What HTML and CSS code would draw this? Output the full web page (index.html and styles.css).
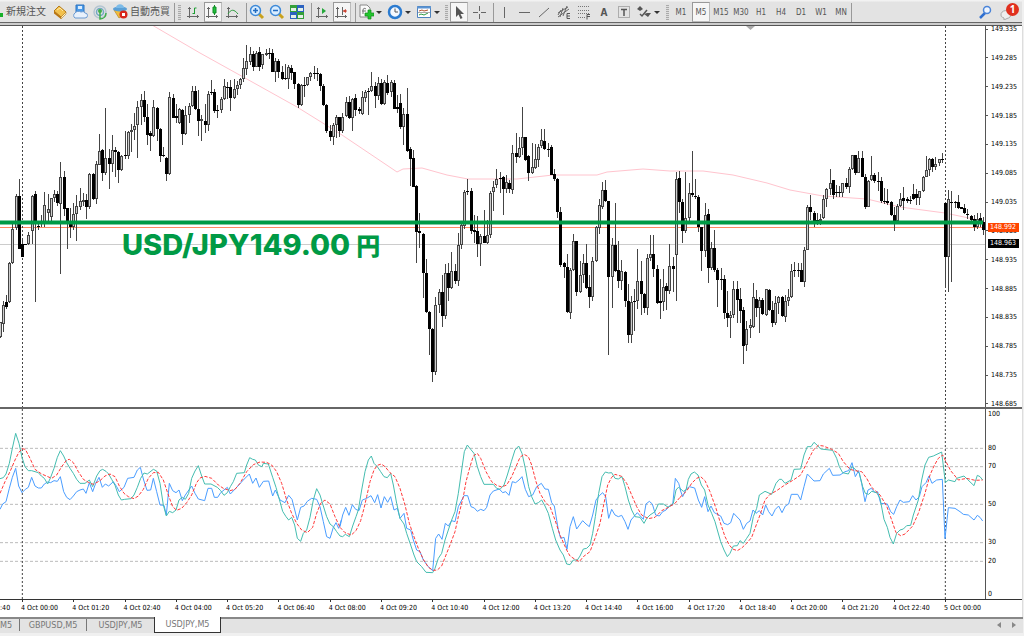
FILE: index.html
```html
<!DOCTYPE html>
<html lang="ja">
<head>
<meta charset="utf-8">
<title>USDJPY,M5</title>
<link rel="stylesheet" href="styles.css">
</head>
<body>
<header class="toolbar">
  <button class="tool new-order"><svg class="plus-edge" viewBox="0 0 4 16"><path d="M0 10h3v4H0z" fill="#17b02a"/></svg>新規注文</button>
  <button class="tool" aria-label="Market"><svg viewBox="0 0 16 16"><path d="M2 7 7 2l7 6-5 5z" fill="#f2c14e" stroke="#b57a17"/><path d="m2 7 7 6v2L2 9.500z" fill="#b8730f"/><path d="m9 13 5-5v2l-5 5z" fill="#fff3c8" stroke="#b57a17" stroke-width=".6"/><path d="m5 6 3-2 3 3" fill="none" stroke="#ffe9a3"/></svg></button>
  <button class="tool" aria-label="Cloud"><svg viewBox="0 0 16 16"><path d="M4 1h8v8H4z" fill="#4d9be8" stroke="#2b73c0"/><path d="M6 2h4v3H6z" fill="#d8ecff"/><path d="M3 14a3 3 0 0 1 0-5 4 3 0 0 1 6-1 3 3 0 0 1 4 1 2.500 2.500 0 0 1 0 5z" fill="#e8f1fc" stroke="#6c9bd2"/></svg></button>
  <button class="tool" aria-label="Signals"><svg viewBox="0 0 16 16" fill="none"><circle cx="8" cy="8" r="6" stroke="#b4c5d1" stroke-width="1.500"/><circle cx="8" cy="8" r="3.500" stroke="#75a8c4" stroke-width="1.500"/><path d="M8 7v8c4 0 6-3 6-6" stroke="#3fae4b" stroke-width="1.500"/><circle cx="8" cy="7" r="2" fill="#3fae4b"/></svg></button>
  <button class="tool auto-trade"><svg viewBox="0 0 16 16"><path d="m2 7 5 8 7-5-2-5z" fill="#f0bd3d" stroke="#bd851c" stroke-width=".7"/><ellipse cx="8" cy="6" rx="7" ry="2.500" fill="#5a9fd6"/><path d="M4 5c0-5 8-5 8 0z" fill="#7cbbe8"/><circle cx="11.500" cy="11.500" r="4" fill="#d8261c"/><path d="M10 10h3v3h-3z" fill="#fff"/></svg>自動売買</button>
  <span class="sep"></span><span class="grip"></span>
  <button class="tool" aria-label="Bars"><svg viewBox="0 0 16 16" fill="none" stroke="#666"><path d="M4.500 3v11M2 12.500h12M3 4.500h3M12.500 11v3"/><path d="M9.500 10V4h2M7.500 9.500h2" stroke="#1d9e33"/></svg></button>
  <button class="tool on" aria-label="Candles"><svg viewBox="0 0 16 16" fill="none" stroke="#666"><path d="M3.500 3v11M1 12.500h12M2 4.500h3M11.500 11v3"/><path d="M9.500 1v10" stroke="#118c25"/><path d="M8 3h3v6H8z" fill="#20c03d" stroke="#118c25"/></svg></button>
  <button class="tool" aria-label="Line"><svg viewBox="0 0 16 16" fill="none" stroke="#666"><path d="M3.500 3v11M1 12.500h12M2 4.500h3M11.500 11v3"/><path d="M3 10c3-5 6-5 10 0" stroke="#2a9b3b"/></svg></button>
  <span class="sep"></span>
  <button class="tool" aria-label="Zoom in"><svg viewBox="0 0 16 16"><path d="m10 10 4 4" stroke="#c9a11c" stroke-width="3"/><circle cx="6.500" cy="6.500" r="5" fill="#d9edff" stroke="#3f8ad8" stroke-width="1.500"/><path d="M4 6.500h5M6.500 4v5" stroke="#226bc0" stroke-width="1.500"/></svg></button>
  <button class="tool" aria-label="Zoom out"><svg viewBox="0 0 16 16"><path d="m10 10 4 4" stroke="#c9a11c" stroke-width="3"/><circle cx="6.500" cy="6.500" r="5" fill="#d9edff" stroke="#3f8ad8" stroke-width="1.500"/><path d="M4 6.500h5" stroke="#226bc0" stroke-width="1.500"/></svg></button>
  <button class="tool" aria-label="Tile"><svg viewBox="0 0 16 16"><path d="M1 1h7v7H1zM8 8h7v7H8z" fill="#34a03a"/><path d="M8 1h7v7H8zM1 8h7v7H1z" fill="#2c62c0"/><path d="M2 4h5v3H2zM9 4h5v3H9zM2 11h5v3H2zM9 11h5v3H9z" fill="#e4f0e8"/></svg></button>
  <span class="sep wide"></span>
  <button class="tool" aria-label="Auto scroll"><svg viewBox="0 0 16 16" fill="none" stroke="#666"><path d="M4.500 3v11M2 12.500h12M3 4.500h3M12.500 11v3"/><path d="M8 4v6l4-3z" fill="#25a83b" stroke="none"/></svg></button>
  <button class="tool on" aria-label="Chart shift"><svg viewBox="0 0 16 16" fill="none" stroke="#666"><path d="M3.500 3v11M1 12.500h12M2 4.500h3M11.500 11v3M8.500 3v8"/><path d="M13 7H9" stroke="#c43"/><path d="M12 5v4L9 7z" fill="#c43" stroke="none"/></svg></button>
  <span class="sep"></span>
  <button class="tool drop" aria-label="Indicators"><svg viewBox="0 0 16 16"><path d="M2 1h7l3 3v9H2z" fill="#fafafa" stroke="#888"/><path d="M5 10V6c0-2 2-2 3-1M4 7h4" fill="none" stroke="#777"/><path d="M7 9h3V6h3v3h3v3h-3v3h-3v-3H7z" fill="#22c52d" stroke="#118a1b" stroke-width=".7"/></svg></button>
  <button class="tool drop" aria-label="Periods"><svg viewBox="0 0 16 16"><circle cx="8" cy="8" r="6" fill="#f4f9ff" stroke="#2b7bd0" stroke-width="2.500"/><path d="M8 4.500V8h3" fill="none" stroke="#555"/></svg></button>
  <button class="tool drop" aria-label="Templates"><svg viewBox="0 0 16 16" fill="none"><path d="M1.500 2.500h13v11h-13z" fill="#fff" stroke="#4f83bd"/><path d="M1 3.500h14" stroke="#5b93d3" stroke-width="2"/><path d="m3 7 3-1 2 1 4-1" stroke="#b5522d"/><path d="m3 11 2-1 3 1 4-2" stroke="#2f9a43"/><path d="M2 8.500h12" stroke="#aaa"/></svg></button>
  <span class="grip lined"></span>
  <button class="tool on" aria-label="Cursor"><svg viewBox="0 0 16 16"><path d="M5 2v11l2.500-2.500L9.500 15l2-1-2-4H13z" fill="#555"/></svg></button>
  <button class="tool" aria-label="Crosshair"><svg viewBox="0 0 16 16" stroke="#666"><path d="M2 8.500h5M10 8.500h5M8.500 2v5M8.500 10v5"/></svg></button>
  <span class="sep wide"></span>
  <button class="tool" aria-label="Vertical line"><svg viewBox="0 0 16 16" stroke="#666"><path d="M8.500 3v11"/></svg></button>
  <button class="tool" aria-label="Horizontal line"><svg viewBox="0 0 16 16" stroke="#666"><path d="M3 8.500h11"/></svg></button>
  <button class="tool" aria-label="Trend line"><svg viewBox="0 0 16 16" stroke="#666"><path d="M3 13 13 4"/></svg></button>
  <button class="tool" aria-label="Channel"><svg viewBox="0 0 16 16" fill="none" stroke="#666"><path d="m2 9 10-6M2 13 13 5M4 13l3-9M7 12l4-10M2 11l3-5"/><path d="M14 9.500h-3v5h3M11 12h3" stroke="#555"/></svg></button>
  <button class="tool" aria-label="Fibonacci"><svg viewBox="0 0 16 16" fill="none" stroke="#777"><path d="M2 2.500h12M2 6.500h12M2 9.500h12M2 13.500h7" stroke-dasharray="1 1"/><path d="M14 10.500h-3v5M11 12.500h3" stroke="#555"/></svg></button>
  <button class="tool letter">A</button>
  <button class="tool" aria-label="Text label"><svg viewBox="0 0 16 16" fill="none" stroke="#777"><path d="M2.500 2.500h11v11h-11z" stroke-dasharray="1 1"/><path d="M5 5.500h6M8 5v7" stroke="#555" stroke-width="1.500"/></svg></button>
  <button class="tool drop" aria-label="Arrows"><svg viewBox="0 0 16 16"><path d="m4 2 3 3-3 2-3-2zM11 9h4l-3 4-4-3z" fill="#555"/><path d="m4 10 2 2 5-6" fill="none" stroke="#555" stroke-width="1.500"/></svg></button>
  <span class="grip lined far"></span>
  <button class="tool period">M1</button><button class="tool period on">M5</button><button class="tool period">M15</button><button class="tool period">M30</button><button class="tool period">H1</button><button class="tool period">H4</button><button class="tool period">D1</button><button class="tool period">W1</button><button class="tool period">MN</button>
  <span class="sep end"></span>
  <button class="tool search" aria-label="Search"><svg viewBox="0 0 16 16"><path d="m7 9-5 5" stroke="#2f6fd0" stroke-width="2.500"/><circle cx="9" cy="6" r="3.500" fill="#eef5ff" stroke="#4a84d8" stroke-width="1.500"/></svg></button>
  <button class="tool alerts" aria-label="Messages"><svg viewBox="0 0 16 16"><path d="M1 11a5 4 0 1 1 6 3.500L4 16v-2c-2-1-3-1-3-3z" fill="#eee" stroke="#aaa"/></svg><span class="badge">1</span></button>
</header>
<main class="chart">
  <section class="price">
    <svg class="plot" id="price" viewBox="0 26 985 381" preserveAspectRatio="none">
      <path d="M0 244.500H985" stroke="#ccc"/>
      <path d="M0 227.500H985" stroke="#ff8a60"/>
      <path d="M746 26h9l-4.500 4z" fill="#aaa"/>
      <path class="day" d="M22.500 26V407M945.500 26V407"/>
      <polyline class="average" points="152,25 200,53 245,78 297,107 342,135 397,172 403,169 422,168 447,175 468,179 517,179 553,175 597,175 607,172 643,169 670,171 703,171 733,175 767,183 790,190 823,196 867,199 900,207 945,213 983,221"/>
      <g id="candles"></g>
      <path d="M0 222.500H983" stroke="#009a45" stroke-width="4"/>
    </svg>
    <p class="caption">USD/JPY149.00<span>円</span></p>
    <ol class="scale">
      <li>149.335</li><li>149.285</li><li>149.235</li><li>149.185</li><li>149.135</li><li>149.085</li><li>149.035</li><li>148.985</li><li>148.935</li><li>148.885</li><li>148.835</li><li>148.785</li><li>148.735</li><li>148.685</li>
    </ol>
    <span class="quote ask">148.992</span>
    <span class="quote bid">148.963</span>
  </section>
  <section class="oscillator">
    <svg class="plot" viewBox="0 27 2955 570" preserveAspectRatio="none">
      <path class="levels" d="M0 145H2955M0 200H2955M0 313H2955M0 428H2955M0 484H2955"/>
      <path class="day wide" d="M67 27V597M2836 27V597"/>
      <g class="blue">
        <polyline points="0,328 8,312 18,305 28,265 37,232 47,205 56,258 66,278 76,268 85,262 95,232 105,258 115,264 124,264 133,252 143,246 152,248 162,242 172,244 181,230 191,275 200,292 210,299 220,288 230,275 240,270 250,267 258,280 268,248 278,275 287,250 297,232 307,262 316,252 326,258 340,245 350,260 358,275 372,262 383,235 402,232 412,210 421,202 431,240 441,271 452,270 460,235 470,275 480,315 492,316 499,345 508,250 518,272 528,278 537,270 547,302 556,285 575,258 585,280 595,297 614,302 624,265 635,265 643,292 653,292 662,278 682,262 691,282 710,262 730,240 748,222 758,250 768,234 778,262 790,244 806,243 818,288 826,270 840,300 855,308 866,286 876,298 892,360 902,322 912,318 922,304 935,295 950,298 960,320 970,365 980,410 990,415 1000,382 1008,368 1016,385 1024,360"/>
        <polyline transform="translate(1020)" points="0,380 8,345 17,322 27,346 37,314 47,328 57,332 67,300 80,295 93,287 104,308 113,284 123,324 133,290 143,307 152,290 162,330 172,325 180,355 192,340 200,385 212,390 220,420 230,450 240,455 250,480 265,500 278,512 287,415 296,402 306,418 316,370 325,378 335,362 345,365 355,320 372,287 383,287 393,320 403,324 412,334 422,328 432,332 440,322 450,285 460,273 478,267 488,278 497,275 507,286 517,245 527,248 537,240 546,230 556,268 566,290 578,285 590,260 604,250 615,267 625,268 635,308 643,318 655,390 662,415 672,412 681,448 690,380 700,350 710,387 728,362 738,372 748,380 758,345 768,300 778,287 788,278 797,290 806,355 815,328 825,345 835,350 845,346 855,365 864,388 873,360 892,338 910,358 918,312 928,304 937,312 947,345 958,348 968,335 978,330 988,318 998,315 1006,235 1016,250 1022,270"/>
        <polyline transform="translate(2040)" points="0,268 8,290 18,268 28,260 44,264 55,300 65,322 74,290 84,335 93,318 103,338 122,348 132,370 143,374 152,368 161,340 180,360 190,388 200,370 210,363 219,330 228,340 238,332 248,345 257,315 266,335 276,348 286,328 296,318 306,338 316,318 326,312 334,283 353,283 362,300 372,260 382,222 402,243 420,242 430,222 448,205 458,226 480,225 495,215 506,212 516,188 526,230 536,212 545,250 555,305 564,270 574,265 585,278 593,275 602,310 622,312 632,335 641,343 650,320 660,300 670,307 688,305 698,287 708,300 718,290 726,260 738,248 747,228 756,250 770,240 787,238 795,416 805,323 825,325 840,335 850,343 865,345 882,360 892,346 900,352 908,363"/>
      </g>
      <g class="teal">
        <polyline points="0,236 10,233 18,222 28,190 37,145 47,100 57,130 66,172 75,200 85,212 95,212 105,215 115,218 124,228 133,235 143,252 152,232 162,205 172,172 181,152 191,168 200,188 210,205 220,220 230,238 240,250 255,250 268,240 278,260 290,228 300,212 308,208 318,214 326,222 335,238 345,256 355,285 364,300 374,298 393,296 402,285 412,262 422,235 432,219 442,222 460,208 470,213 480,250 490,315 499,348 508,334 518,338 528,330 537,300 547,292 556,298 566,280 575,235 585,213 595,197 604,225 614,252 633,252 652,262 662,272 672,286 682,278 691,260 700,245 710,220 733,218 740,195 749,173 758,178 766,180 776,196 786,200 790,190 805,192 818,232 828,262 838,298 848,334 858,350 866,360 875,352 884,375 892,415 902,424 910,400 920,390 930,352 940,300 950,266 960,285 970,318 980,350 990,372 1000,380 1010,395 1020,408"/>
        <polyline transform="translate(1020)" points="0,408 8,410 16,403 28,410 38,378 48,350 55,330 65,270 75,215 85,180 94,168 102,190 112,200 122,215 132,230 142,233 152,220 160,255 170,310 180,355 192,372 200,400 212,435 222,465 230,485 245,500 258,517 278,518 285,505 295,475 305,460 315,420 325,390 335,360 345,335 355,280 365,210 373,155 382,135 392,148 402,160 412,200 422,230 432,253 460,253 470,265 480,268 492,255 502,225 514,185 525,150 536,138 546,160 556,205 566,260 575,290 585,312 595,308 605,300 615,318 625,340 637,385 647,420 660,450 670,465 680,492 690,494 700,480 712,480 720,468 730,447 740,445 750,435 758,400 766,350 776,280 786,230 796,216 806,219 815,218 825,235 835,237 846,230 855,260 865,300 875,330 885,350 900,352 912,370 920,355 930,345 945,335 955,312 970,312 985,322 1000,310 1008,270 1015,262 1020,265"/>
        <polyline transform="translate(2040)" points="0,265 10,274 18,270 25,238 33,222 43,216 54,225 64,255 74,270 84,315 95,340 105,365 112,390 122,425 132,450 142,470 150,460 160,438 172,437 180,422 190,430 200,415 210,400 220,350 230,325 238,285 255,274 275,283 288,250 298,238 305,238 315,250 333,240 342,208 362,207 372,165 382,140 393,140 402,127 412,136 422,147 458,151 470,175 478,200 488,218 505,222 516,200 526,208 538,220 548,260 556,280 566,283 575,274 590,278 600,295 612,358 622,382 630,412 640,432 650,400 660,390 670,387 680,377 692,376 700,345 715,300 725,240 735,195 746,172 760,168 785,156 796,248 805,240 825,245 830,235 852,228 862,238 882,257 892,226 900,230 908,240"/>
      </g>
      <g class="red">
        <polyline points="0,280 15,245 30,215 45,180 56,158 66,146 76,148 90,175 105,208 125,222 155,235 170,225 185,200 200,180 208,178 220,188 235,215 250,238 265,247 280,253 300,242 315,228 330,222 345,230 358,258 372,280 385,290 402,296 415,288 430,268 445,235 460,218 475,217 490,240 505,285 518,320 530,331 545,325 560,308 575,285 590,248 600,234 615,229 635,235 655,255 670,265 690,272 705,268 720,250 740,215 760,194 780,186 800,187 815,195 830,215 845,250 860,300 875,340 890,370 905,390 922,398 938,382 950,340 962,310 975,300 990,312 1005,350 1020,382"/>
        <polyline transform="translate(1020)" points="0,382 15,398 34,405 48,392 62,362 72,325 80,290 90,245 102,210 112,196 124,192 135,200 150,218 165,230 180,265 195,315 208,370 220,405 235,445 250,478 265,502 280,511 292,510 305,498 318,465 330,435 345,395 355,350 370,290 378,245 390,200 400,168 412,160 422,175 438,215 455,245 470,256 485,261 500,255 515,230 528,200 540,172 552,163 565,170 575,195 588,245 600,280 615,305 630,320 645,360 660,405 680,450 690,468 705,478 718,485 730,470 750,455 765,415 780,370 792,310 803,255 815,232 825,223 845,229 860,250 875,285 890,320 905,345 925,356 945,352 965,332 985,322 1005,310 1020,292"/>
        <polyline transform="translate(2040)" points="0,292 20,273 35,250 50,235 62,230 75,242 90,275 108,325 120,365 135,410 148,435 158,447 172,452 185,444 200,430 215,412 225,385 240,345 255,300 270,283 290,272 310,258 340,240 362,225 380,190 400,150 415,136 430,138 455,148 475,160 490,185 510,208 525,212 545,215 560,235 575,262 600,285 620,318 635,360 648,398 662,407 675,402 698,378 715,340 735,280 750,225 762,198 775,175 788,165 798,185 812,212 835,240 860,235 885,241 908,240"/>
      </g>
    </svg>
    <ol class="levels-scale"><li>100</li><li>80</li><li>70</li><li>50</li><li>30</li><li>20</li><li>0</li></ol>
  </section>
  <ol class="times">
    <li>:40</li><li>4 Oct 00:00</li><li>4 Oct 01:20</li><li>4 Oct 02:40</li><li>4 Oct 04:00</li><li>4 Oct 05:20</li><li>4 Oct 06:40</li><li>4 Oct 08:00</li><li>4 Oct 09:20</li><li>4 Oct 10:40</li><li>4 Oct 12:00</li><li>4 Oct 13:20</li><li>4 Oct 14:40</li><li>4 Oct 16:00</li><li>4 Oct 17:20</li><li>4 Oct 18:40</li><li>4 Oct 20:00</li><li>4 Oct 21:20</li><li>4 Oct 22:40</li><li>5 Oct 00:00</li>
  </ol>
</main>
<nav class="tabs">
  <button class="tab first">M5</button><button class="tab">GBPUSD,M5</button><button class="tab last">USDJPY,M5</button><button class="tab current">USDJPY,M5</button>
  <button class="scroll" aria-label="Previous"><svg viewBox="0 0 4 6"><path d="M4 0v6L0 3z"/></svg></button>
  <button class="scroll" aria-label="Next"><svg viewBox="0 0 4 6"><path d="M0 0v6l4-3z"/></svg></button>
</nav>
<script src="candles.js"></script>
</body>
</html>
```
FILE: styles.css
```css
* { box-sizing: border-box; }
body {
  margin: 0;
  min-height: 100vh;
  display: flex;
  flex-direction: column;
  background: #f0f0f0;
  color: #000;
  font: 7px/10px "DejaVu Sans Condensed", "DejaVu Sans", "Noto Sans CJK JP", sans-serif;
}
ol { list-style: none; margin: 0; padding: 0; }
button { border: 0; padding: 0; background: none; font: inherit; color: inherit; }

.toolbar {
  display: flex;
  align-items: center;
  height: 26px;
  padding-bottom: 2px;
  margin-right: 2px;
  background: linear-gradient(#f2f2f2 1px, #e3e3e3 2px, #e3e3e3 22px, #666 22px, #666 23px, #ccc 23px, #ccc 25px, #555 25px);
  overflow: hidden;
}
.tool {
  flex: none;
  display: flex;
  align-items: center;
  justify-content: center;
  position: relative;
  width: 20px;
  height: 20px;
  color: #555;
}
.tool svg { flex: none; width: 16px; height: 16px; }
.tool.on { background: #f6f6f6; border: 1px solid #bbb; border-top-color: #999; border-left-color: #999; width: 18px; margin: 0 1px; }
.new-order, .auto-trade { font: 10px/16px "Noto Sans CJK JP", sans-serif; justify-content: flex-start; padding-bottom: 3px; }
.new-order { width: 50px; gap: 2px; }
.tool .plus-edge { width: 4px; }
.auto-trade { width: 61px; gap: 2px; padding-left: 2px; }
.drop { width: 29px; justify-content: flex-start; padding-left: 2px; gap: 1px; }
.drop::after { content: ""; border: 3px solid transparent; border-top-color: #333; border-bottom: 0; margin-left: 1px; }
.letter { font-size: 10px; font-weight: bold; padding-top: 2px; }
.period { font-size: 8px; padding-top: 2px; }
.sep { flex: none; width: 4px; height: 19px; border-right: 1px solid #999; }
.sep.wide { width: 5px; }
.sep.end { width: 1px; }
.grip { flex: none; width: 3px; height: 15px; margin: 0 2px 0 3px; background: repeating-linear-gradient(#aaa 0 1px, #ddd 1px 2px); }
.grip.lined { margin: 0 1px 0 2px; }
.grip.far { margin: 0 2px 0 3px; }
.search { margin-left: auto; }
.alerts { width: 26px; justify-content: flex-start; padding-left: 4px; }
.badge {
  position: absolute;
  top: 1px;
  right: 3px;
  width: 13px;
  height: 13px;
  border-radius: 7px;
  background: #e0301e;
  color: #fff;
  font: bold 10px/13px "Open Sans", sans-serif;
}

.chart { background: #fff; margin-right: 1px; border-right: 1px solid #ddd; }
.price, .oscillator { display: grid; grid-template-columns: 1fr 36px; position: relative; }
.plot { display: block; width: 100%; border-right: 1px solid #555; }
.price .plot { height: 381px; }
.oscillator .plot { height: 190px; }
.oscillator { border-top: 2px solid #666; border-bottom: 1px solid #333; }
.day { stroke: #444; stroke-dasharray: 2 2; }
.day.wide { stroke-width: 3; stroke-dasharray: 6 6; }
.average { fill: none; stroke: #ffc4ce; }
.candle { stroke: #000; shape-rendering: crispEdges; }
.candle.up { fill: #ccc; stroke: #444; }
.down { fill: #000; }
.wick { stroke: #444; shape-rendering: crispEdges; }
.levels { stroke: #bbb; stroke-width: 3; stroke-dasharray: 9 6; }
.blue, .teal, .red { fill: none; stroke-width: 3; stroke-linejoin: round; }
.blue { stroke: #4a9dff; }
.teal { stroke: #45bdb0; }
.red { stroke: #ff3a3a; stroke-dasharray: 10 5; }
.caption {
  position: absolute;
  left: 122px;
  top: 203px;
  display: flex;
  align-items: baseline;
  gap: 6px;
  margin: 0;
  color: #009a45;
  font: 800 29px/32px Inter, "Noto Sans CJK JP", sans-serif;
  white-space: nowrap;
}
.caption span { font-size: 24px; }
.scale { display: flex; flex-direction: column; justify-content: space-between; line-height: 6px; }
.scale li { display: flex; align-items: center; gap: 3px; }
.scale li::before { content: ""; width: 2px; height: 1px; background: #555; }
.quote { position: absolute; right: 3px; width: 31px; line-height: 9px; padding-left: 2px; color: #fff; }
.ask { top: 197px; background: #ff4500; }
.bid { top: 213px; background: #000; }
.levels-scale { display: grid; grid-template-rows: 34fr 18fr 38fr 38fr 19fr 33fr 10fr; padding-left: 2px; }
.times { display: grid; grid-template-columns: 21px repeat(18, 1fr) 78px; height: 17px; white-space: nowrap; }
.times li::before { content: ""; display: block; width: 1px; height: 2px; margin: 0 0 1px 1px; background: #333; }
.times li:first-child::before { background: none; }

.tabs {
  display: flex;
  height: 16px;
  margin-right: 1px;
  background: #e3e3e3;
  border-top: 2px solid #888;
  color: #777;
  font-size: 9px;
}
.tab { height: 12px; line-height: 11px; border-right: 1px solid #777; width: 67px; }
.tab.first { width: 20px; padding-right: 8px; text-align: right; }
.tab.last { border-right: 0; }
.tab.current { height: 16px; margin-top: -2px; background: #fff; border: 1px solid #333; border-top: 0; }
.scroll { width: 15px; height: 12px; }
.scroll svg { width: 4px; height: 6px; fill: #888; }
.tab.current + .scroll { margin-left: auto; }
.scroll:last-child { margin-right: 2px; }
```
FILE: candles.js
```js
// Each bar: direction (u/d), high, body top, body bottom, low, in thirds of a pixel below `top`.
const runs = [
  { start: -7, top: 20, bars: `u905,905,950,955 u842,856,911,936 d825,847,860,866 u726,730,845,848 u605,628,730,731 u521,527,625,629 d478,527,686,686
d655,671,710,712 d673,673,674,674 u636,645,673,675 u526,527,632,671 d512,522,605,845 d605,618,619,629 d586,605,608,620 u516,556,605,620 u522,568,578,604 u534,535,592,605
u510,521,534,545 d513,522,550,558 u425,472,551,762 d454,470,566,588 d564,565,612,686 d565,610,620,653 u550,583,620,630 u524,558,583,662 u505,542,560,570 u518,541,545,558
d522,541,562,596 u459,462,562,566 d460,462,538,540 u423,432,538,551 u342,394,436,436 d388,390,458,484 u265,414,458,466 d388,415,433,506 u344,390,433,456 d382,389,396,470
d393,395,449,489 u405,408,449,452 d332,406,408,416 u333,335,407,416 u313,330,336,395 u279,319,331,360 u242,262,316,414 u222,241,262,316 d214,241,290,306 d253,290,346,374
d332,340,348,394 u240,262,348,350 d262,264,328,363 d325,326,407,425 d381,405,408,412 d412,415,461,482 u216,232,463,464 d222,234,293,294 d251,289,295,310 u265,268,310,312
d268,270,343,374 u259,286,343,346 u248,259,284,310 u198,214,259,260 d198,212,268,271 d209,267,304,349 u284,298,304,362 d251,302,314,340 u212,222,316,332 u181,216,218,224
d207,217,273,278 d255,270,272,294 u231,236,270,278 u176,199,236,240 u187,201,204,238 d180,202,234,272 u178,206,234,238 u182,196,206,224 u175,178,196,207 u115,143,178,186
u76,124,146,166 u80,103,127,134 d92,101,140,154 u92,98,140,142 d80,97,140,152 u101,103,136,148 u86,99,105,108 d85,98,99,118 d86,99,155,157 u115,124,155,187
d118,124,157,174 d139,155,177,179 u133,174,178,181 u136,142,176,206 d136,143,158,181 d155,157,193,206 d190,192,254,263 u191,194,256,257 u172,196,197,230 u170,172,196,198
u155,160,172,182 u137,158,160,178 d143,158,161,184 d160,162,198,214 d191,198,256,258 d252,254,334,340 d316,334,352,364 u308,316,352,375 u286,292,314,354 d290,292,332,352
u278,290,334,340 u232,247,288,292 d228,246,293,298 u234,236,293,332 d222,234,270,287 d262,266,272,283 u214,232,283,285 u210,216,234,246 u205,212,217,286 u156,198,212,217
d186,198,229,263 u170,189,229,240 d178,190,253,254 u180,187,253,254 d165,189,218,224 u181,186,216,230 d180,189,266,267 d226,262,266,278 d222,250,322,326 u264,282,322,375
d204,283,394,396 d382,387,416,497 d390,415,500,502 d495,498,636,730 d578,634,640,684 d640,642,760,834 d716,760,876,878 d874,876,926,1006 d924,926,1057,1085 u830,856,1057,1064
u808,815,854,878 d764,815,888,920 u732,760,888,896 d730,760,803,842 u695,752,803,806 d732,752,784,792 u640,676,784,797 u604,614,674,686 u511,517,617,626 d478,514,516,526
d505,512,634,642 d586,630,636,662` },
  { start: 141, top: 90, bars: `d378,420,426,458 d378,424,463,500 u432,438,463,527 d360,437,458,460 u390,436,458,462 u304,310,436,445 u272,290,306,364 u236,266,286,294 u246,264,268,310
d258,260,296,376 u256,276,296,310 d270,278,298,310 u166,190,300,313 d129,190,202,220 u140,174,202,205 u50,140,174,196 d140,141,210,214 d196,197,250,272 u160,232,250,252
u163,208,234,236 u162,170,210,232 u118,150,168,174 d118,154,178,180 d158,176,178,201 d166,170,254,256 d236,252,268,274 d265,268,367,384 d350,367,524,532 d516,520,530,565
d492,530,666,670 u535,540,670,688 u432,454,541,544 d453,454,605,618 u514,556,605,608 u492,520,554,580 d463,520,594,598 d556,592,620,655 u500,512,622,634 u408,412,512,516
u328,346,414,432 u276,300,350,358 d270,300,334,337 d332,334,562,794 u444,466,560,655 d340,466,544,546 d453,540,574,595 u510,543,572,600 d542,545,632,652 d582,632,736,760
u618,636,736,760 u598,632,636,722 u478,574,633,656 d514,574,612,674 d608,611,655,670 u492,505,655,676 u436,493,504,512 d434,493,536,562 d524,536,638,642 d566,634,638,686
u538,592,636,662 d578,588,602,660 u463,528,602,612 d500,528,536,606 u246,266,496,632 d242,264,335,370 d328,336,424,460 u246,385,424,428 u280,308,384,400 d184,308,316,320
d266,318,322,327 d315,320,411,425 d410,412,482,543 u338,376,484,500 d357,373,535,579 u457,474,535,540 d420,474,540,546 d534,540,570,650 d535,568,571,600 d555,567,670,686
d604,670,684,710 u662,674,684,745 u574,598,674,684 d574,598,630,700 d594,628,662,698 d650,660,767,823 u692,716,764,784 u686,706,714,743 u580,620,710,715 d600,628,654,682
u622,630,654,728 d625,630,672,674 u596,598,674,678 d598,599,660,664 d632,660,698,710 u618,640,698,704 u618,620,640,672 d618,620,678,680 u616,632,680,695 u596,622,632,648
u522,544,620,624 d516,540,543,560 d520,541,543,560 d520,541,576,577 u472,480,576,592 u346,350,480,480 d314,350,366,390 d364,368,392,411 d370,390,400,404 u372,388,392,405
u316,328,385,386 u294,296,326,352 u237,278,296,314 d270,271,314,328 d284,306,310,322 u288,306,310,322 u278,280,310,320 d264,280,292,296 u231,238,292,310 u194,196,236,240
d194,196,250,256 u184,204,248,250 d184,204,260,262 d252,260,350,358 u270,272,350,352 u198,256,270,272 d250,256,274,278 d246,272,276,302 d262,274,334,340 d295,332,336,342
d298,334,338,346 d334,336,376,378 d352,374,392,424 u343,348,392,394 u308,326,348,352 d292,324,334,360 d320,328,332,340 u318,330,334,343 d283,312,328,330 d298,312,324,344
u302,304,324,344 u258,260,304,306 u197,240,260,260 u204,206,240,258 d204,206,232,246 u202,222,230,240 u206,208,220,228 d190,207,209,218 d336,338,500,595 u300,328,500,606
d302,336,338,576 u334,335,338,355 d316,336,354,358 d350,352,356,358 d342,354,370,372 d358,372,376,388 d374,378,390,395 d376,388,410,422 u370,388,410,416 d370,384,392,412
d382,395,420,434` }
];

const BAR_STEP = 923 / 288;
const FIRST_BAR_X = 22;
let markup = "";
for (const { start, top, bars } of runs) {
  bars.split(/\s+/).forEach((bar, n) => {
    const [high, open, close, low] = bar.slice(1).split(",").map(v => Math.round(top + v / 3));
    const x = Math.round(FIRST_BAR_X + (start + n) * BAR_STEP);
    const height = Math.max(0, close - open - 1);
    markup += `<path class="wick" d="M${x + 0.5} ${high}V${low}"/>`;
    markup += `<rect class="candle ${bar[0] === "u" ? "up" : "down"}" x="${x - 0.5}" y="${open + 0.5}" width="2" height="${height}"/>`;
    if (height === 0) markup += `<path class="candle" d="M${x - 1} ${open + 0.5}h3"/>`;
  });
}
document.getElementById("candles").innerHTML = markup;
```
